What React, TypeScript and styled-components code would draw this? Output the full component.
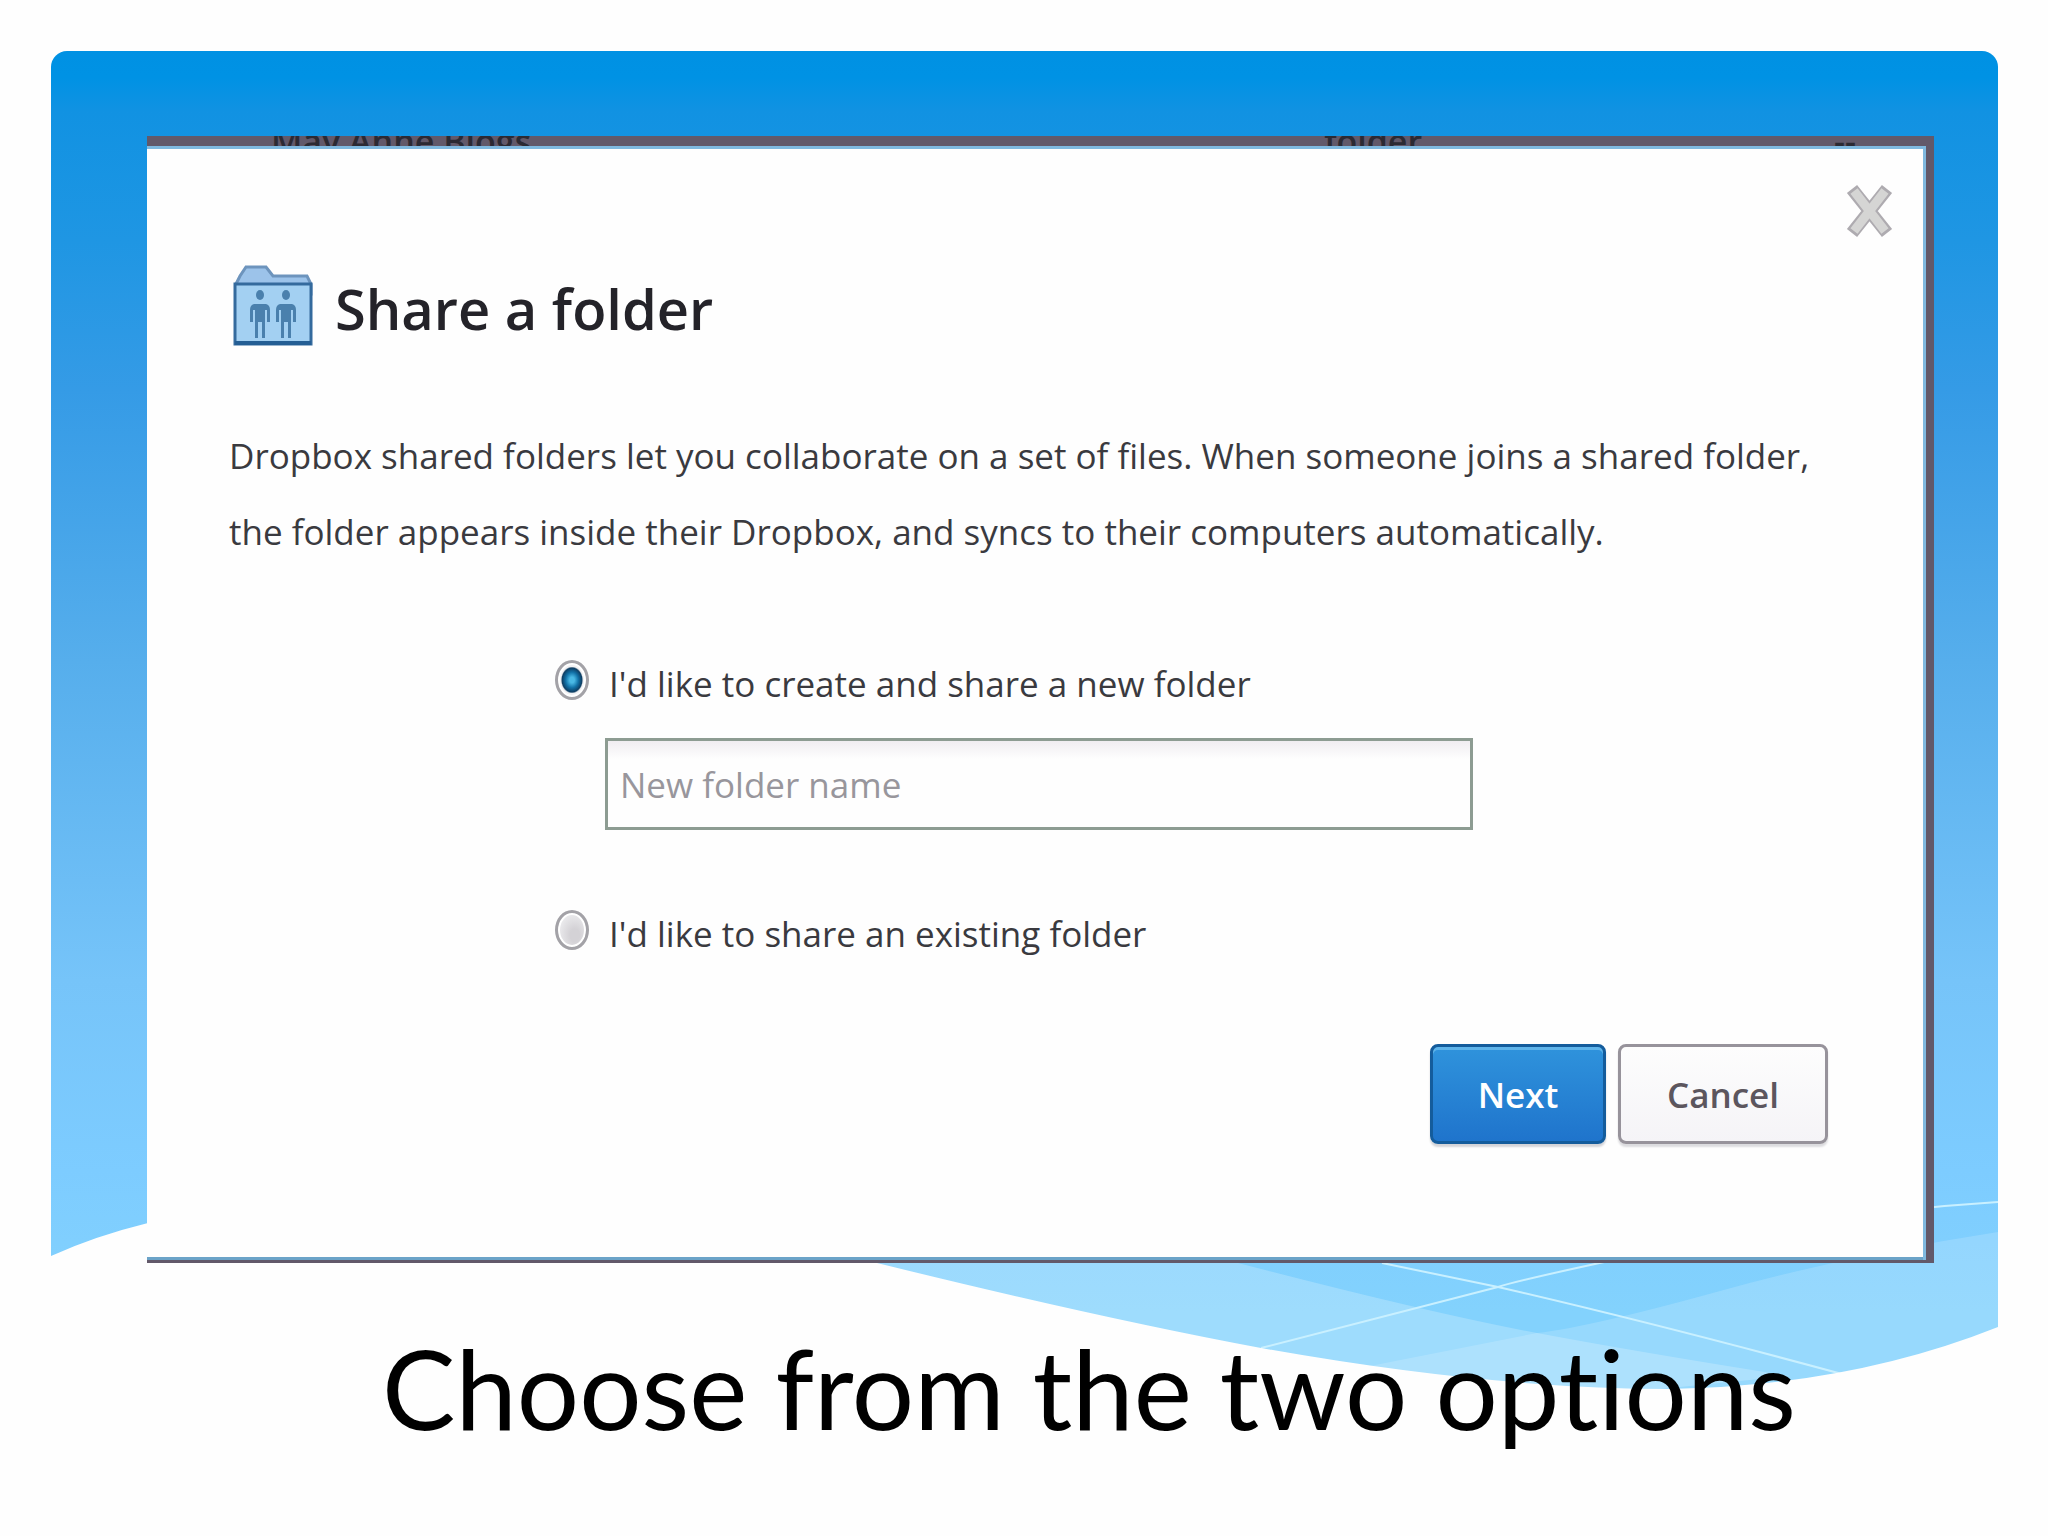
import React, { useState } from "react";
import styled, { createGlobalStyle } from "styled-components";

const GlobalStyle = createGlobalStyle`
  *, *::before, *::after { box-sizing: border-box; }
  body { margin: 0; background: #fefefe; }
`;

const Slide = styled.main`
  position: relative;
  min-height: 100vh;
  padding: 136px 114px 48px 147px;
  font-family: "Open Sans", "Noto Sans", sans-serif;
  color: #3a3a3f;
`;

const Backdrop = styled.div`
  position: absolute;
  inset: 51px 50px auto 51px;
  height: 1340px;
  border-radius: 16px 16px 0 0;
  overflow: hidden;
  background: linear-gradient(
    #0091e3 0,
    #0092e4 26px,
    #1192e2 60px,
    #1f96e3 190px,
    #359be6 340px,
    #56aeec 610px,
    #76c4f9 930px,
    #7dccff 1120px,
    #83d2fd 1260px
  );
`;

const Waves = styled.svg`
  display: block;
  width: 100%;
  height: 100%;
`;

const Dialog = styled.section`
  position: relative;
  padding: 120px 98px 116px 82px;
  background: #fefefe;
  border-style: solid;
  border-color: #62596a;
  border-width: 10px 8px 3px 0;
  box-shadow: inset -3px 3px 0 #7fb9e0, inset 0 -3px 0 #6ba3c8;
`;

const UnderText = styled.div`
  position: absolute;
  top: -10px;
  left: 0;
  right: 0;
  height: 10px;
  overflow: hidden;
  display: flex;
  justify-content: space-between;
  padding: 0 70px 0 124px;
  font-size: 34px;
  font-weight: 600;
  line-height: 10px;
  color: #2c2a33;
`;

const UnderRight = styled.span`
  display: flex;
  gap: 412px;
`;

const CloseButton = styled.button`
  position: absolute;
  top: 35px;
  right: 28px;
  width: 52px;
  height: 60px;
  padding: 0;
  border: 0;
  background: none;
  cursor: pointer;
  svg { display: block; width: 100%; height: 100%; }
`;

const Header = styled.header`
  display: flex;
  align-items: center;
  gap: 22px;
  padding-left: 4px;
  height: 80px;
`;

const FolderIcon = styled.svg`
  flex: none;
  width: 80px;
  height: 84px;
`;

const Title = styled.h1`
  margin: 4px 0 0;
  font-size: 56px;
  line-height: 80px;
  font-weight: 600;
  color: #242329;
`;

const Intro = styled.p`
  margin: 72px 0 0;
  font-size: 35px;
  line-height: 76px;
`;

const Options = styled.form`
  margin-top: 76px;
`;

const Choices = styled.div`
  padding-left: 326px;
`;

const Option = styled.label`
  display: flex;
  align-items: center;
  gap: 20px;
  font-size: 35px;
  line-height: 76px;
`;

const Radio = styled.input`
  appearance: none;
  flex: none;
  margin: 0 0 8px;
  width: 34px;
  height: 40px;
  border: 3px solid #a3a2a7;
  border-radius: 50%;
  background: radial-gradient(ellipse at 60% 65%, #d4d2d6 0 20%, #ededef 75%);
  box-shadow: inset 0 0 0 2px #fff;
  &:checked {
    background: radial-gradient(ellipse at center, #49b8e4 0 12%, #1272a8 32%, #0e3e63 50%, #f1f1f3 56%);
  }
`;

const NameField = styled.input`
  display: block;
  width: 868px;
  height: 92px;
  margin: 16px 0 66px 50px;
  padding: 0 12px;
  border: 3px solid #8d9c92;
  border-radius: 0;
  background: linear-gradient(#f0edf1 0, #fefefe 18px);
  font: 35px "Open Sans", "Noto Sans", sans-serif;
  color: #3a3a3f;
  outline: none;
  &::placeholder { color: #98969c; opacity: 1; }
`;

const Actions = styled.div`
  display: flex;
  justify-content: flex-end;
  gap: 12px;
  margin-top: 72px;
`;

const ActionButton = styled.button<{ $primary?: boolean }>`
  width: ${(p) => (p.$primary ? 176 : 210)}px;
  height: 100px;
  padding: 0;
  border: 3px solid ${(p) => (p.$primary ? "#145c9c" : "#97939b")};
  border-radius: 8px;
  background: ${(p) => (p.$primary ? "linear-gradient(#2f93dc, #1f74cc)" : "linear-gradient(#fdfdfd, #f5f4f7)")};
  box-shadow: ${(p) => (p.$primary ? "inset 0 3px 0 #5fb4ea, 0 3px 2px #d4d4d8" : "0 3px 2px #dcdcdf")};
  font: 600 35px "Open Sans", "Noto Sans", sans-serif;
  color: ${(p) => (p.$primary ? "#ffffff" : "#5c565e")};
  cursor: pointer;
`;

const Caption = styled.h2`
  position: relative;
  margin: 52px 0 0 235px;
  font: 400 110px/144px Lato, "Open Sans", sans-serif;
  font-variant-ligatures: none;
  color: #000;
`;

function Person({ x }: { x: number }) {
  return (
    <g transform={`translate(${x} 0)`} fill="#4a80ad">
      <ellipse cx="0" cy="31" rx="4" ry="5" />
      <path d="M-6 40H6Q10 41 10 46V58H7V46H5V74H2V58H-2V74H-5V46H-7V58H-10V46Q-10 41-6 40Z" />
    </g>
  );
}

export default function App() {
  const [choice, setChoice] = useState("new");
  const [name, setName] = useState("");
  return (
    <>
      <GlobalStyle />
      <Slide>
        <Backdrop>
          <Waves viewBox="51 51 1947 1340" preserveAspectRatio="none" aria-hidden="true">
            <path d="M1238 1263Q1430 1313 1537 1333T1790 1376L1600 1395L1200 1395L860 1263Z" fill="#fff" opacity=".22" />
            <path d="M1998 1232Q1850 1255 1720 1291T1537 1333L1360 1368L1500 1395H1998Z" fill="#fff" opacity=".16" />
            <g fill="none" stroke="#c9f0ff" strokeWidth="2">
              <path d="M1382 1263L1498 1287Q1650 1322 1842 1374" />
              <path d="M1998 1202Q1850 1211 1690 1244T1498 1287L1261 1348" />
            </g>
            <path d="M51 1256Q95 1236 148 1223Q500 1150 877 1263Q1100 1318 1261 1348Q1490 1389 1670 1389Q1850 1386 1998 1327V1400H51Z" fill="#fefefe" />
          </Waves>
        </Backdrop>

        <Dialog aria-labelledby="share-title">
          <UnderText aria-hidden="true">
            <span>May Anne Blogs</span>
            <UnderRight>
              <span>folder</span>
              <span>--</span>
            </UnderRight>
          </UnderText>
          <CloseButton type="button" aria-label="Close">
            <svg viewBox="0 0 52 60">
              <path d="M6 8L41 52M41 8L6 52" stroke="#aeabb0" strokeWidth="13" />
              <path d="M8 10L39 50M39 10L8 50" stroke="#d5d5d4" strokeWidth="9" />
            </svg>
          </CloseButton>
          <Header>
            <FolderIcon viewBox="0 0 80 84" aria-hidden="true">
              <path d="M3 20L7 12L13 3H33L40 12H74L78 20V30H3Z" fill="#9cc3ea" stroke="#6d94bd" strokeWidth="3" />
              <rect x="2" y="20" width="76" height="60" fill="#a3d0f2" stroke="#346a9d" strokeWidth="3" />
              <path d="M2 79H78" stroke="#245e94" strokeWidth="4" />
              <Person x={27} />
              <Person x={53} />
            </FolderIcon>
            <Title id="share-title">Share a folder</Title>
          </Header>
          <Intro>
            Dropbox shared folders let you collaborate on a set of files. When someone joins a shared folder, the
            folder appears inside their Dropbox, and syncs to their computers automatically.
          </Intro>
          <Options onSubmit={(e) => e.preventDefault()}>
            <Choices>
              <Option>
                <Radio type="radio" name="mode" checked={choice === "new"} onChange={() => setChoice("new")} />
                I'd like to create and share a new folder
              </Option>
              <NameField
                aria-label="New folder name"
                placeholder="New folder name"
                value={name}
                onChange={(e) => setName(e.target.value)}
              />
              <Option>
                <Radio type="radio" name="mode" checked={choice === "existing"} onChange={() => setChoice("existing")} />
                I'd like to share an existing folder
              </Option>
            </Choices>
            <Actions>
              <ActionButton type="submit" $primary>Next</ActionButton>
              <ActionButton type="button">Cancel</ActionButton>
            </Actions>
          </Options>
        </Dialog>

        <Caption>Choose from the two options</Caption>
      </Slide>
    </>
  );
}
